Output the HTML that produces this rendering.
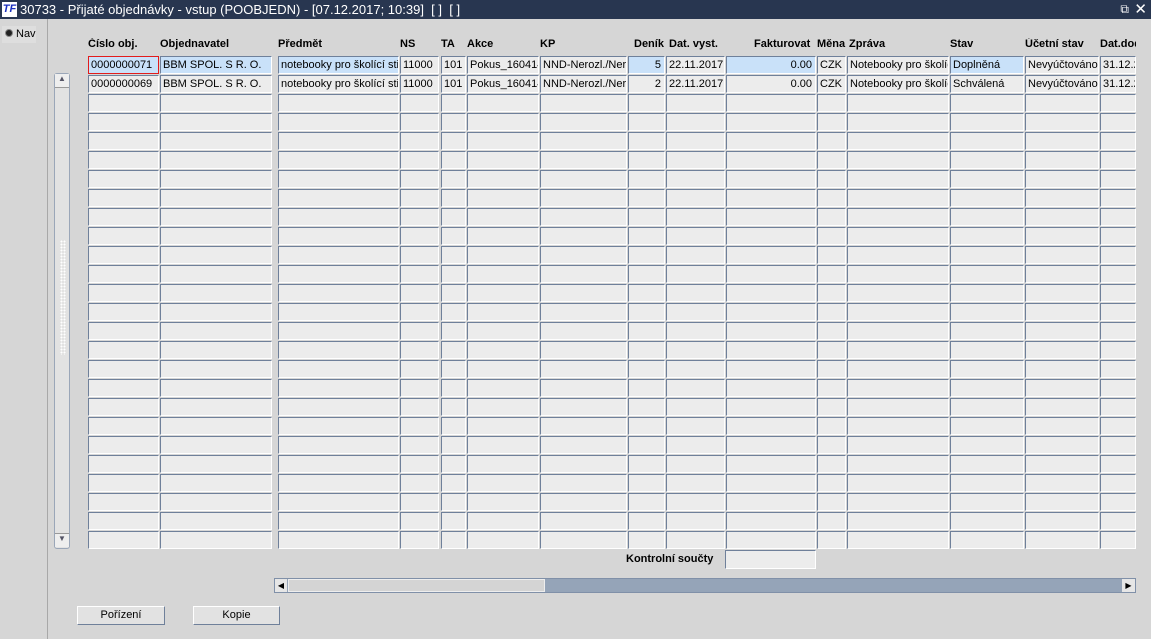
<!DOCTYPE html>
<html><head><meta charset="utf-8"><style>
*{margin:0;padding:0;box-sizing:border-box}
body{width:1151px;height:639px;background:#d6d6d6;font-family:"Liberation Sans",sans-serif;font-size:11px;position:relative;overflow:hidden}
.tb{position:absolute;left:0;top:0;width:1151px;height:19px;background:#283650;color:#fff;font-size:13px;line-height:19px;padding-left:20px}
.logo{position:absolute;left:2px;top:2px;width:15px;height:15px;background:#fff;color:#1a2fc0;font:bold italic 11px "Liberation Sans",sans-serif;line-height:15px;text-align:center}
.lp{position:absolute;left:0;top:19px;width:48px;height:620px;border-right:1px solid #a8a8a8;background:#d6d6d6}
.c{position:absolute;height:18px;background:#ececec;border:1px solid;border-color:#6f809a #fff #fff #6f809a;white-space:nowrap;overflow:hidden;line-height:17px;padding-left:2px;font-size:11px}
.b{background:#c9e1f9}
.h{position:absolute;top:38px;font-weight:bold;font-size:11px}
.btn{position:absolute;top:606px;height:19px;border:1px solid;border-color:#fff #6f809a #6f809a #fff;background:#e2e2e2;text-align:center;line-height:17px}
</style></head><body>
<div class="tb"><div class="logo">TF</div>30733 - Přijaté objednávky - vstup (POOBJEDN) - [07.12.2017; 10:39]&nbsp; [ ]&nbsp; [ ]
<span style="position:absolute;right:22px;top:0;font-size:12px">⧉</span><span style="position:absolute;right:4px;top:0;font-size:15px">✕</span></div>
<div class="lp"><div style="position:absolute;left:2px;top:7px;width:34px;height:17px;background:#dedede;font-size:11px;line-height:17px"><span style="display:inline-block;width:8px;height:8px;border-radius:50%;background:#222;border:1px solid #888;margin:0 3px 0 3px"></span>Nav</div></div>
<div id="g"></div>
<div style="position:absolute;left:54px;top:73px;width:16px;height:476px;background:#e2e2e2;border:1px solid #9aa6b8;border-radius:3px"></div>
<div style="position:absolute;left:55px;top:74px;width:14px;height:14px;background:#eee;border-bottom:1px solid #999;font-size:8px;text-align:center;color:#556">▲</div>
<div style="position:absolute;left:55px;top:533px;width:14px;height:14px;background:#eee;border-top:1px solid #999;font-size:8px;text-align:center;color:#556">▼</div>
<div style="position:absolute;left:60px;top:240px;width:6px;height:115px;background-image:radial-gradient(#fff 1px,transparent 1px);background-size:3px 3px"></div>
<div style="position:absolute;left:626px;top:553px;font-weight:bold">Kontrolní součty</div>
<div class="c" style="left:725px;top:550px;width:91px;height:19px"></div>
<div style="position:absolute;left:274px;top:578px;width:862px;height:15px;background:#95a4b8;border:1px solid #8090a8"></div>
<div style="position:absolute;left:275px;top:579px;width:12px;height:13px;background:#e6e6e6;font-size:8px;line-height:13px;text-align:center">◀</div>
<div style="position:absolute;left:288px;top:579px;width:257px;height:13px;background:#d4d4d4;border:1px solid #eee"></div>
<div style="position:absolute;left:1122px;top:579px;width:13px;height:13px;background:#e6e6e6;font-size:8px;line-height:13px;text-align:center">▶</div>
<div class="btn" style="left:77px;width:88px">Pořízení</div>
<div class="btn" style="left:193px;width:87px">Kopie</div>
<script>
var cols=[[88,71,"Číslo obj."],[160,112,"Objednavatel"],[278,121,"Předmět"],[400,39,"NS"],[441,25,"TA"],[467,72,"Akce"],[540,87,"KP"],[628,37,"Deník"],[666,59,"Dat. vyst."],[726,90,"Fakturovat"],[817,29,"Měna"],[847,102,"Zpráva"],[950,74,"Stav"],[1025,74,"Účetní stav"],[1100,36,"Dat.dod"]];
var hx=[88,160,278,400,441,467,540,634,669,754,817,849,950,1025,1100];
var r=[["0000000071","BBM SPOL. S R. O.","notebooky pro školící stř","11000","101","Pokus_160414","NND-Nerozl./Nerozl","5","22.11.2017","0.00","CZK","Notebooky pro školící","Doplněná","Nevyúčtováno","31.12.2017"],
["0000000069","BBM SPOL. S R. O.","notebooky pro školící stř","11000","101","Pokus_160414","NND-Nerozl./Nerozl","2","22.11.2017","0.00","CZK","Notebooky pro školící","Schválená","Nevyúčtováno","31.12.2017"]];
var blue=[0,1,2,7,9,12],right=[7,9],h="";
cols.forEach(function(c,i){h+='<div class="h" style="left:'+hx[i]+'px;width:'+(i==14?36:200)+'px;overflow:hidden;white-space:nowrap">'+c[2]+'</div>';});
for(var j=0;j<26;j++){var y=56+j*19;cols.forEach(function(c,i){var t=j<2?r[j][i]:"";var cl="c"+(j==0&&blue.indexOf(i)>=0?" b":"");var st='left:'+c[0]+'px;top:'+y+'px;width:'+c[1]+'px;';if(right.indexOf(i)>=0)st+='text-align:right;padding-right:3px;';if(j==0&&i==0)st+='border:1px solid #e21c1c;';h+='<div class="'+cl+'" style="'+st+'">'+t+'</div>';});}
document.getElementById('g').innerHTML=h;
</script>
</body></html>
